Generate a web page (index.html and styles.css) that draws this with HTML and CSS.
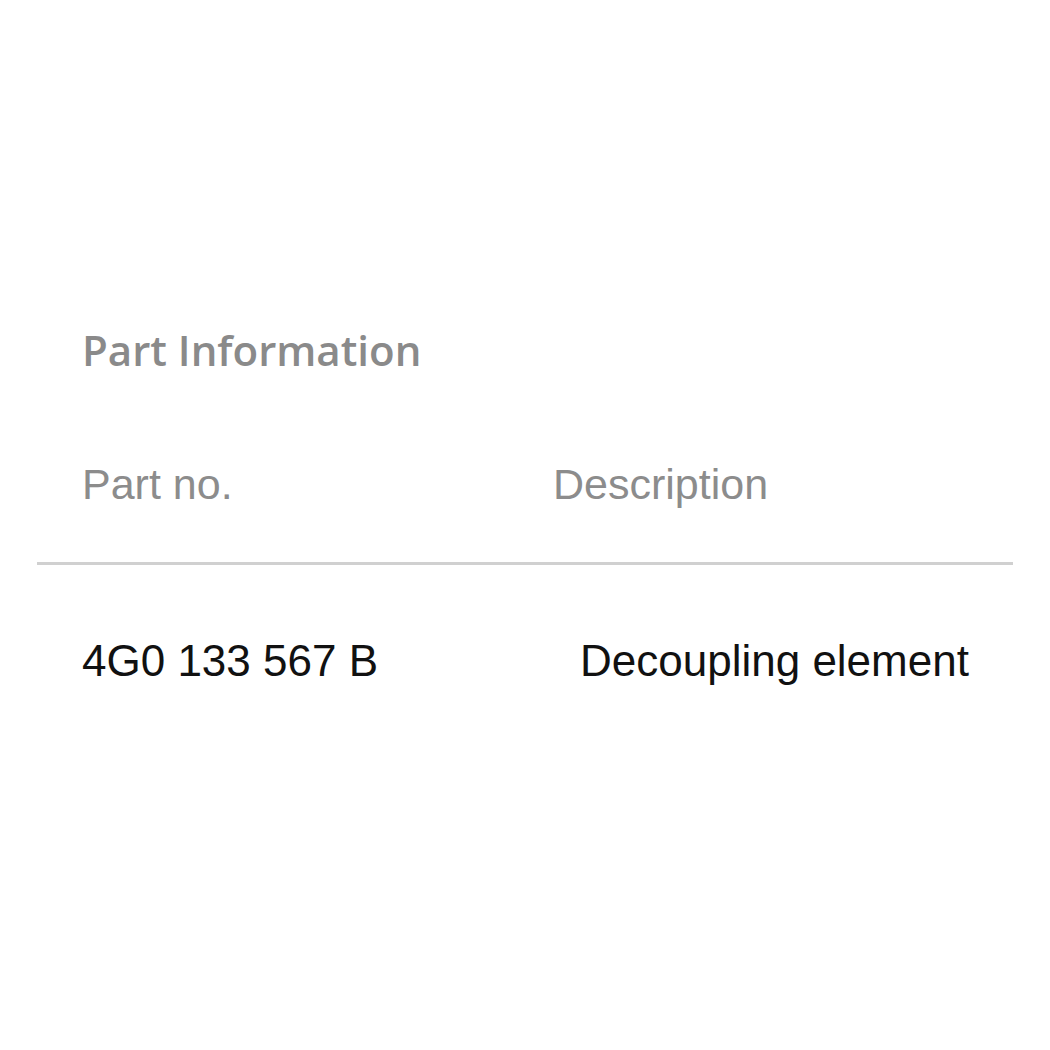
FILE: index.html
```html
<!DOCTYPE html>
<html>
<head>
<meta charset="utf-8">
<link rel="stylesheet" href="styles.css">
</head>
<body>
<main class="panel">
  <h2 class="title">Part Information</h2>
  <div class="head-row">
    <span class="col-part">Part no.</span>
    <span class="col-desc">Description</span>
  </div>
  <div class="data-row">
    <span class="col-part">4G0 133 567 B</span>
    <span class="col-desc2">Decoupling element</span>
  </div>
</main>
</body>
</html>
```
FILE: styles.css
```css
html, body {
  margin: 0;
  padding: 0;
  background: #ffffff;
}
body {
  width: 1050px;
  height: 1050px;
  font-family: "Liberation Sans", Arial, sans-serif;
}
.panel {
  padding: 324px 37px 0 37px;
}
.title {
  margin: 0 0 0 45px;
  font-family: "Open Sans", sans-serif;
  font-weight: 600;
  font-size: 42px;
  line-height: 52px;
  color: #8a8a8a;
}
.head-row {
  display: flex;
  padding: 83px 0 53px 45px;
  border-bottom: 3px solid #d0d0d0;
  font-size: 43px;
  line-height: 50px;
  color: #8c8c8c;
}
.head-row .col-part {
  width: 471px;
}
.data-row {
  display: flex;
  padding: 71px 0 0 45px;
  font-size: 44px;
  line-height: 50px;
  color: #111111;
}
.data-row .col-part {
  width: 498px;
}
```
